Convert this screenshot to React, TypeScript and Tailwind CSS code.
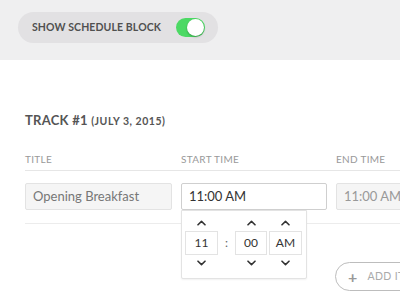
const Chevron = ({ down = false }: { down?: boolean }) => (
  <svg width="9" height="6" viewBox="0 0 9 6" className="block">
    <path
      d={down ? 'M1 1.2 L4.5 4.6 L8 1.2' : 'M1 4.8 L4.5 1.4 L8 4.8'}
      fill="none"
      stroke="#333"
      strokeWidth="1.6"
      strokeLinecap="round"
      strokeLinejoin="round"
    />
  </svg>
);

export default function App() {
  return (
    <div className="w-[400px] h-[300px] overflow-hidden bg-white font-['Lato',sans-serif]">
      {/* Top settings bar */}
      <div className="h-[60px] bg-[#efeff0] pl-[18px] pt-[12px]">
        <div className="w-[200px] h-[31px] rounded-full bg-[#e2e1e3] flex items-center pl-[14px] pr-[13px] justify-between">
          <span className="text-[10.5px] font-bold tracking-[0.01em] text-[#505050] uppercase">
            Show Schedule Block
          </span>
          <div className="w-[29px] h-[19px] rounded-full bg-[#4cd964] flex items-center justify-end pr-[1px]">
            <div className="w-[17px] h-[17px] rounded-full bg-white shadow-[0_1px_2px_rgba(0,0,0,0.3)]" />
          </div>
        </div>
      </div>

      {/* Track section */}
      <div className="pl-[25px] pt-[53px]">
        <h2 className="text-[13px] font-bold text-[#555] tracking-[0.02em] leading-[14px]">
          TRACK #1 <span className="text-[10.5px] tracking-[0.05em]">(JULY 3, 2015)</span>
        </h2>

        <div className="mt-[25px] w-[400px]">
          <div className="grid grid-cols-[156px_155px_155px] border-b border-[#e6e6e6] pb-[5px] text-[10px] leading-[12px] text-[#999] tracking-[0.03em]">
            <span>TITLE</span>
            <span>START TIME</span>
            <span>END TIME</span>
          </div>

          <div className="grid grid-cols-[156px_155px_155px] pt-[12px] h-[53px] border-b border-[#ececec]">
            <div className="w-[147px] h-[27px] bg-[#f5f5f5] border border-[#e3e3e3] rounded-[2px] flex items-center pl-[7px] text-[13px] text-[#777]">
              Opening Breakfast
            </div>
            <div className="relative">
              <div className="w-[146px] h-[27px] bg-white border border-[#cfcfcf] rounded-[2px] flex items-center pl-[7px] text-[13px] text-[#333]">
                11:00 AM
              </div>
              {/* Time picker dropdown */}
              <div className="absolute left-0 top-[27px] w-[126px] h-[69px] bg-white border border-[#e3e3e3] rounded-b-[2px] shadow-[0_1px_2px_rgba(0,0,0,0.06)] z-10 pt-[9px]">
                <div className="flex items-center pl-[3px] text-[12px] text-[#333]">
                  <div className="flex flex-col items-center">
                    <Chevron />
                    <div className="mt-[5px] w-[33px] h-[24px] border border-[#e3e3e3] flex items-center justify-center">11</div>
                    <div className="mt-[5px]"><Chevron down /></div>
                  </div>
                  <span className="w-[17px] text-center text-[#666]">:</span>
                  <div className="flex flex-col items-center">
                    <Chevron />
                    <div className="mt-[5px] w-[32px] h-[24px] border border-[#e3e3e3] flex items-center justify-center">00</div>
                    <div className="mt-[5px]"><Chevron down /></div>
                  </div>
                  <div className="ml-[2px] flex flex-col items-center">
                    <Chevron />
                    <div className="mt-[5px] w-[33px] h-[24px] border border-[#e3e3e3] flex items-center justify-center">AM</div>
                    <div className="mt-[5px]"><Chevron down /></div>
                  </div>
                </div>
              </div>
            </div>
            <div className="w-[147px] h-[27px] bg-[#f5f5f5] border border-[#e3e3e3] rounded-[2px] flex items-center pl-[7px] text-[13px] text-[#999]">
              11:00 AM
            </div>
          </div>

          <div className="pl-[310px] pt-[38px]">
            <button className="h-[29px] w-[120px] rounded-full border border-[#bdbdbd] flex items-center pl-[12px] gap-[10px] text-[10.5px] text-[#aaa] tracking-[0.03em]">
              <span className="text-[16px] font-bold leading-none text-[#999]">+</span>
              ADD ITEM
            </button>
          </div>
        </div>
      </div>
    </div>
  );
}
